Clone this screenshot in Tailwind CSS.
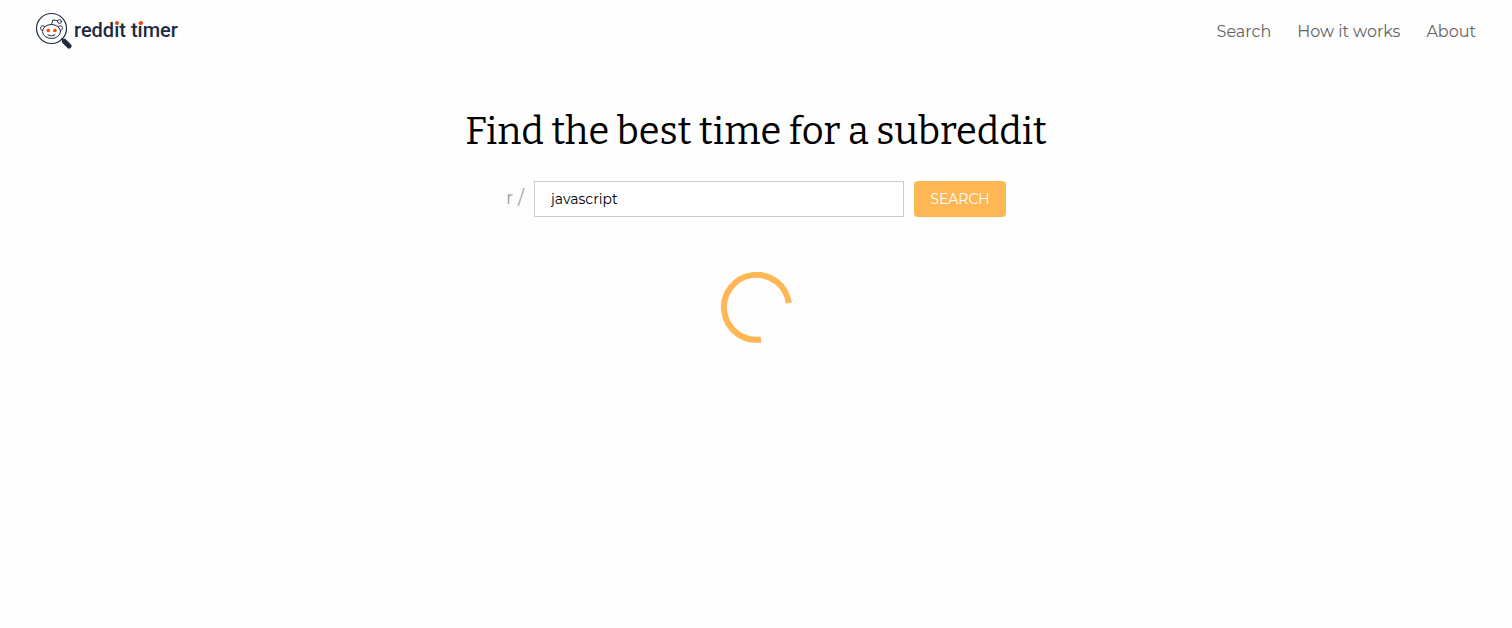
<!DOCTYPE html>
<html lang="en">
<head>
<meta charset="utf-8">
<meta name="viewport" content="width=device-width, initial-scale=1">
<title>reddit timer</title>
<script src="https://cdn.jsdelivr.net/npm/@tailwindcss/browser@4"></script>
</head>
<body class="min-h-screen bg-[#fefefe] font-['Montserrat','Open_Sans',sans-serif]">
<header class="flex items-center justify-between px-9 pt-3">
  <a href="#" class="flex items-start gap-px">
    <svg class="h-[37px] w-[37px]" viewBox="0 0 37 37" fill="none" stroke="#1f2a40" stroke-linecap="round" aria-hidden="true">
      <circle cx="15.5" cy="16.5" r="15" stroke-width="1.2"/>
      <path d="M26 27l2 2" stroke-width="2"/>
      <path d="M28.5 29.5l4.500 4.500" stroke-width="5"/>
      <ellipse cx="15.5" cy="19.5" rx="9" ry="7" stroke-width="1"/>
      <path d="M8.500 14.500C6 12.200 2.500 15.400 5.800 18.500M22.500 14.500C25 12.200 28.500 15.400 25.200 18.500M15.500 12.500l1.500-4.700 4.500 1" stroke-width="1" stroke-linejoin="round"/>
      <circle cx="23.500" cy="9.500" r="1.900" stroke-width="1"/>
      <path d="M12 23q3.500 2.200 7 0" stroke-width="1"/>
      <circle cx="12.300" cy="18.500" r="1.800" fill="#ff4500" stroke="none"/>
      <circle cx="18.900" cy="18.500" r="1.800" fill="#ff4500" stroke="none"/>
    </svg>
    <span class="pt-1 font-['Roboto',sans-serif] text-xl leading-7 font-medium text-[#1f2a40]">redd<span class="relative after:absolute after:top-[3px] after:left-px after:size-1 after:rounded-full after:bg-[#ff4500]">i</span>t t<span class="relative after:absolute after:top-[3px] after:left-px after:size-1 after:rounded-full after:bg-[#ff4500]">i</span>mer</span>
  </a>
  <nav class="flex gap-[26px] pt-0.5 text-base font-normal text-[#636363]">
    <a href="#">Search</a>
    <a href="#">How it works</a>
    <a href="#">About</a>
  </nav>
</header>
<main class="flex flex-col items-center px-4 pt-14">
  <h1 class="text-center font-['Bitter','DejaVu_Serif_Condensed','DejaVu_Serif',serif] text-[38px] leading-[52px] font-normal text-black">Find the best time for a subreddit</h1>
  <form class="mt-6 flex w-full max-w-[500px] items-center gap-[10px]">
    <label for="subreddit" class="pb-0.5 text-lg text-[#a0a0a0]">r /</label>
    <input id="subreddit" type="text" value="javascript" class="h-9 min-w-0 flex-1 border border-[#ccc] bg-white px-4 text-sm text-black outline-none">
    <button type="button" class="h-9 w-[92px] rounded-[4px] bg-[#ffb755] text-sm text-white">SEARCH</button>
  </form>
  <svg class="mt-[55px] size-[72px]" viewBox="0 0 72 72" fill="none" role="img" aria-label="Loading">
    <path d="M41 67.500A32.500 32.500 0 1 1 68.700 31" stroke="#ffb755" stroke-width="6"/>
  </svg>
</main>
</body>
</html>
